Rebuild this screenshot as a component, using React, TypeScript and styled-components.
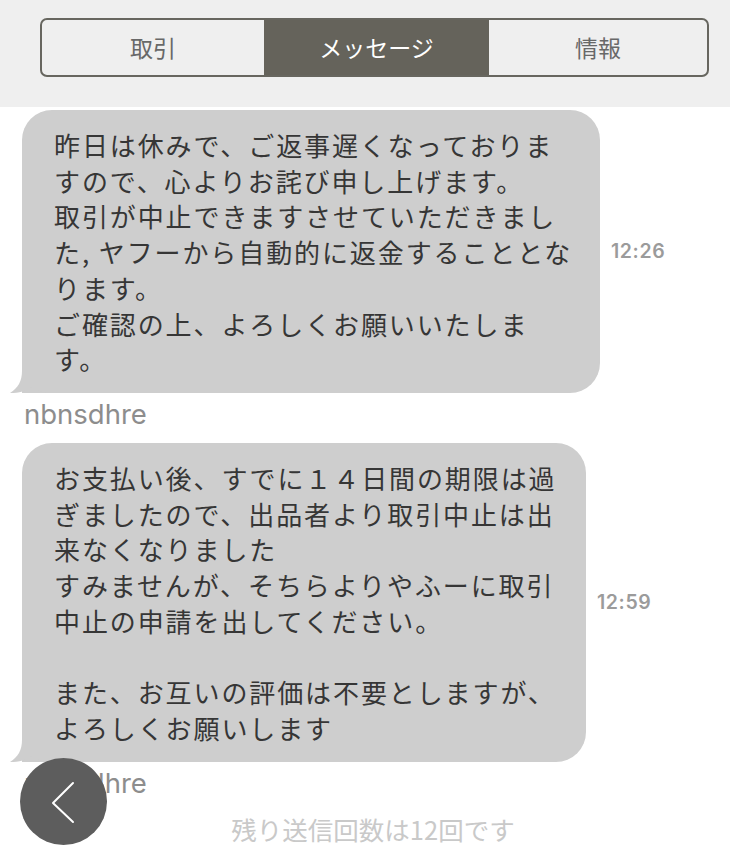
import React from 'react';
import styled, { createGlobalStyle } from 'styled-components';

const GlobalStyle = createGlobalStyle`
  html, body {
    margin: 0;
    padding: 0;
    background: #ffffff;
  }
  body {
    font-family: "Noto Sans CJK JP", "Noto Sans", sans-serif;
  }
`;

const Page = styled.div`
  width: 730px;
  min-height: 860px;
  background: #ffffff;
`;

const Header = styled.header`
  height: 107px;
  background: #efefef;
  padding: 18px 21px 0 40px;
  box-sizing: border-box;
`;

const Segments = styled.nav`
  display: grid;
  grid-template-columns: 222px 225px 1fr;
  height: 59px;
  border: 2px solid #67665f;
  border-radius: 7px;
  box-sizing: border-box;
  overflow: hidden;
`;

const Segment = styled.div<{ $active?: boolean }>`
  display: flex;
  align-items: center;
  justify-content: center;
  font-size: 23px;
  color: ${(p) => (p.$active ? '#ffffff' : '#686868')};
  background: ${(p) => (p.$active ? '#65635b' : 'transparent')};
  padding-bottom: 2px;
`;

const Thread = styled.main`
  padding: 3px 0 0 22px;
  display: flex;
  flex-direction: column;
`;

const Row = styled.div<{ $gap: number }>`
  display: flex;
  align-items: center;
  margin-top: ${(p) => p.$gap}px;
`;

const Bubble = styled.div<{ $width: number }>`
  position: relative;
  width: ${(p) => p.$width}px;
  box-sizing: border-box;
  padding: 17px 0 16px 32px;
  background: #cecece;
  border-radius: 30px 30px 30px 0;
  color: #363636;
  font-size: 26px;
  letter-spacing: 1.9px;
  line-height: 35.7px;
  white-space: pre;
`;

const Tail = styled.svg`
  position: absolute;
  left: -12px;
  bottom: 0;
  width: 42px;
  height: 30px;
`;

const Time = styled.span`
  margin-left: 11px;
  font-family: Inter, "Liberation Sans", sans-serif;
  font-size: 19.5px;
  font-weight: 600;
  letter-spacing: 0.6px;
  color: #9b9b9b;
`;

const Sender = styled.div`
  margin: 6px 0 0 2px;
  font-family: Inter, "Liberation Sans", sans-serif;
  font-size: 27.5px;
  line-height: 30px;
  color: #8d8d8d;
`;

const Remaining = styled.div`
  margin-top: 16px;
  padding-left: 16px;
  text-align: center;
  font-size: 25.5px;
  line-height: 30px;
  color: #c9c9c9;
`;

const BackButton = styled.button`
  position: fixed;
  left: 20px;
  bottom: 15px;
  width: 87px;
  height: 87px;
  border: none;
  border-radius: 50%;
  background: #5d5d5d;
  display: flex;
  align-items: center;
  justify-content: center;
  padding: 0;
  cursor: pointer;
`;

const BubbleTail = () => (
  <Tail viewBox="0 0 42 30">
    <path
      d="M12 0 L12 8 C12 18 8 25 0 30 C9 30 17 28 22 24 C28 28 34 30 42 30 L42 0 Z"
      fill="#cecece"
    />
  </Tail>
);

const messages = [
  {
    text:
      '昨日は休みで、ご返事遅くなっておりま\nすので、心よりお詫び申し上げます。\n取引が中止できますさせていただきまし\nた, ヤフーから自動的に返金することとな\nります。\nご確認の上、よろしくお願いいたしま\nす。',
    time: '12:26',
    width: 578,
    gap: 0,
  },
  {
    text:
      'お支払い後、すでに１４日間の期限は過\nぎましたので、出品者より取引中止は出\n来なくなりました\nすみませんが、そちらよりやふーに取引\n中止の申請を出してください。\n\nまた、お互いの評価は不要としますが、\nよろしくお願いします',
    time: '12:59',
    width: 564,
    gap: 14,
  },
];

const App: React.FC = () => (
  <Page>
    <GlobalStyle />
    <Header>
      <Segments>
        <Segment>取引</Segment>
        <Segment $active>メッセージ</Segment>
        <Segment>情報</Segment>
      </Segments>
    </Header>
    <Thread>
      {messages.map((m) => (
        <React.Fragment key={m.time}>
          <Row $gap={m.gap}>
            <Bubble $width={m.width}>
              {m.text}
              <BubbleTail />
            </Bubble>
            <Time>{m.time}</Time>
          </Row>
          <Sender>nbnsdhre</Sender>
        </React.Fragment>
      ))}
    </Thread>
    <Remaining>残り送信回数は12回です</Remaining>
    <BackButton aria-label="戻る">
      <svg width="40" height="46" viewBox="0 0 40 46">
        <polyline
          points="29,4 9,24 29,43"
          fill="none"
          stroke="#ffffff"
          strokeWidth="2"
          strokeLinecap="round"
          strokeLinejoin="round"
        />
      </svg>
    </BackButton>
  </Page>
);

export default App;
